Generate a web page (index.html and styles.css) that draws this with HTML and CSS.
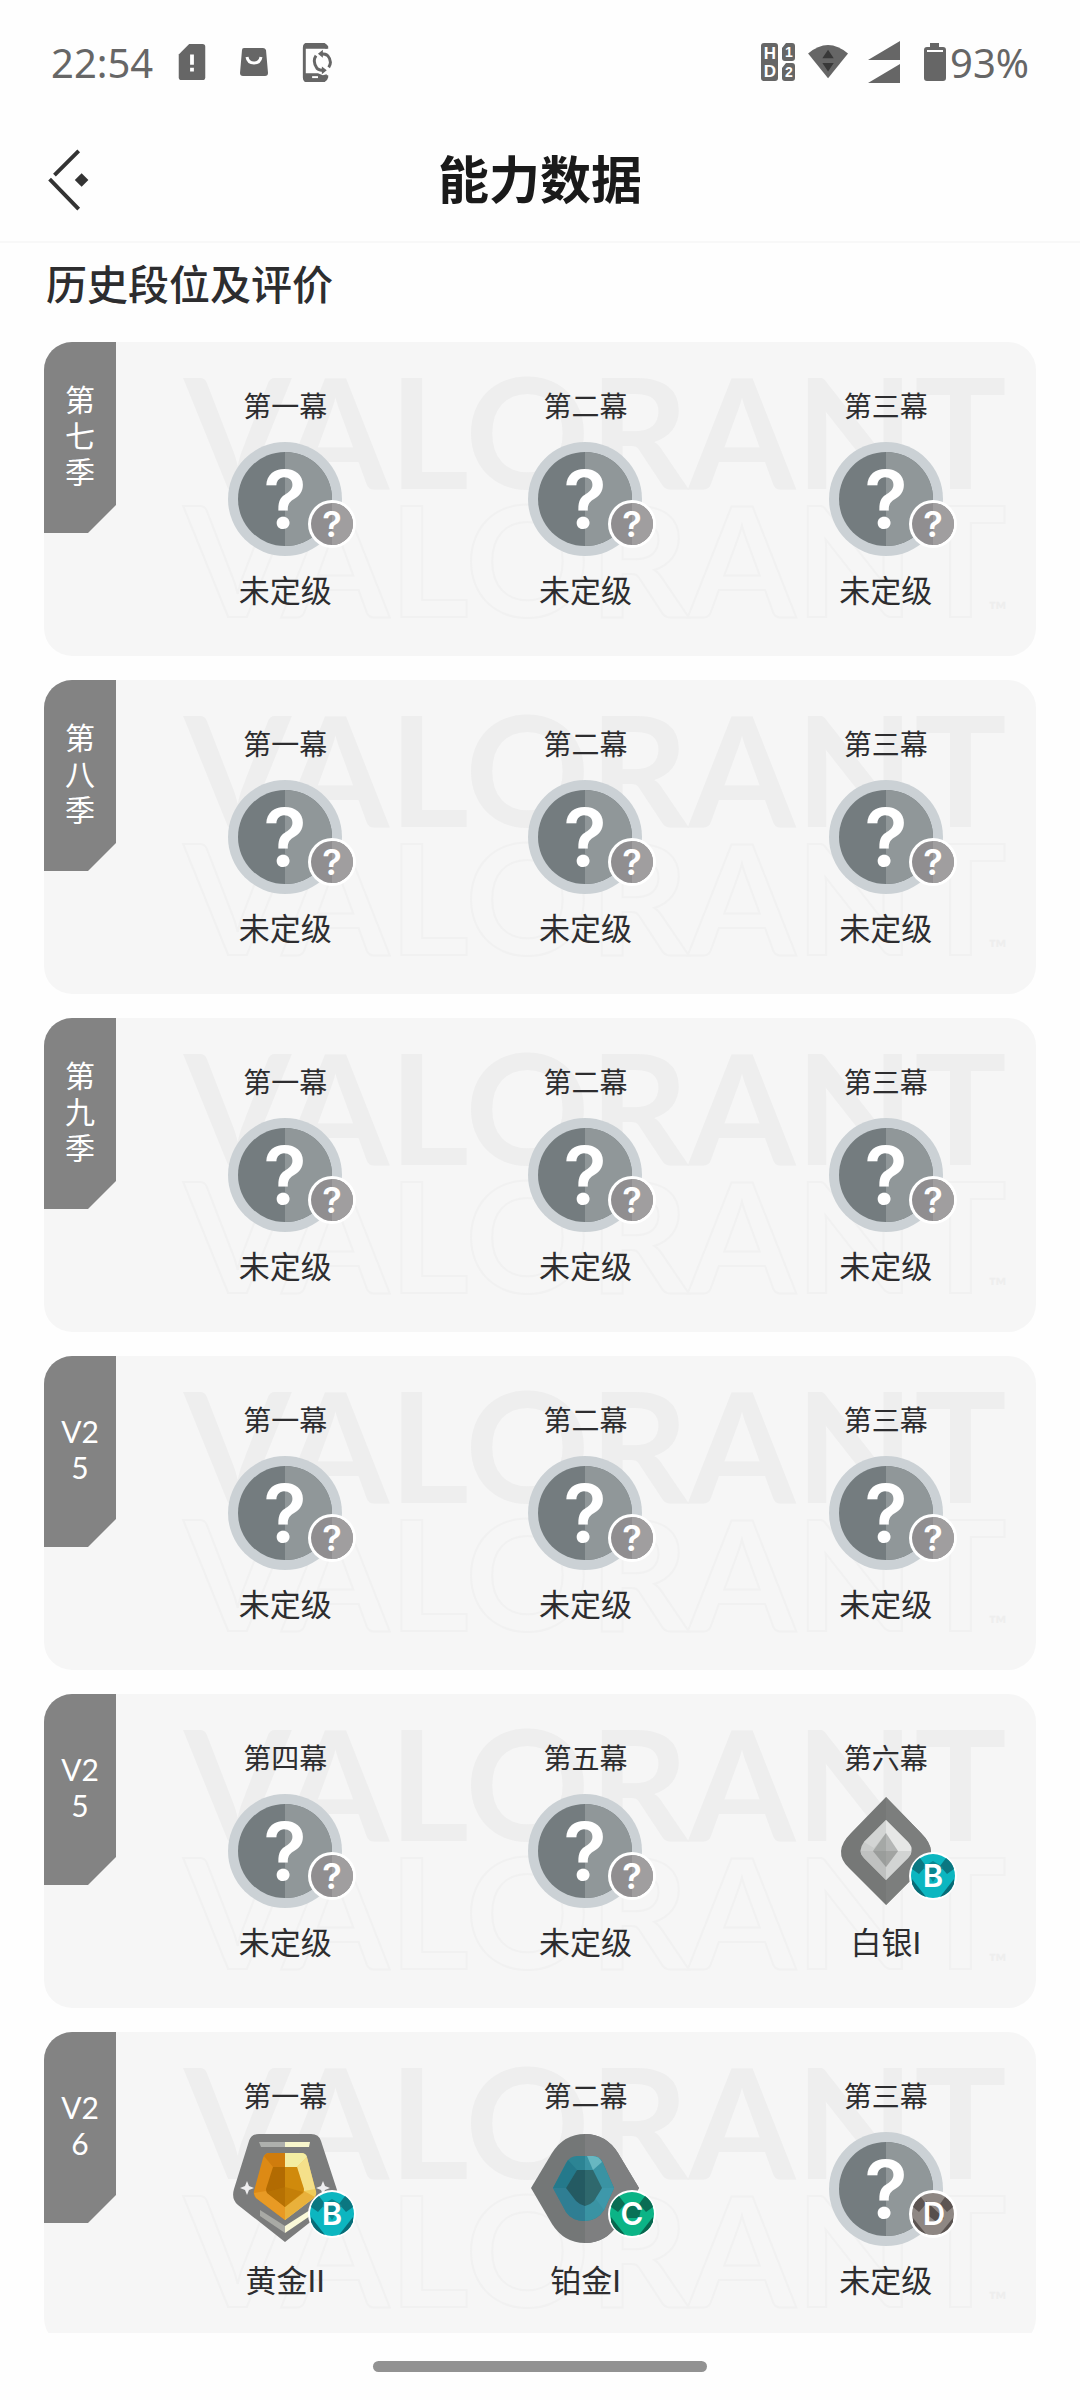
FILE: index.html
```html
<!DOCTYPE html>
<html lang="zh-CN">
<head>
    <meta charset="UTF-8">
    <meta name="viewport" content="width=device-width, initial-scale=1.0">
    <title>能力数据</title>
    <link rel="stylesheet" href="styles.css">
</head>
<body>

    <!-- Shared medals and badges -->
    <svg class="defs" width="0" height="0" aria-hidden="true">
        <symbol id="unranked" viewBox="0 0 114 114">
            <circle cx="57" cy="57" r="57" fill="#cbd1d5"/>
            <circle cx="57" cy="57" r="47" fill="#747c7f"/>
            <path d="M57 10a47 47 0 0 1 0 94z" fill="#909799"/>
            <text class="mark" x="57" y="86" text-anchor="middle">?</text>
        </symbol>
        <symbol id="silver" viewBox="0 0 114 114">
            <path d="M57 3L22 39Q3 58 20 74L57 111L94 74Q111 58 92 39Z" fill="#767877"/>
            <path d="M57 3L92 39Q111 58 94 74L57 111Z" fill="#7c7e7d"/>
            <path d="M57 26L35 48Q28 57 35 64L57 86L79 64Q86 57 79 48Z" fill="#c9cbca"/>
            <path d="M57 26L79 48Q84 53 82 57H57Z" fill="#e6e7e6"/>
            <path d="M57 26L35 48L45 54L57 39Z" fill="#d3d5d4"/>
            <path d="M32 57H57V86L35 64Q31 60 32 57Z" fill="#bfc1c0"/>
            <path d="M57 86V57H82Q83 60 79 64Z" fill="#d2d4d3"/>
            <path d="M57 39L44 57L57 73Z" fill="#a5a8a6"/>
            <path d="M57 39L69 57L57 73Z" fill="#b4b6b5"/>
            <path d="M44 57H69L57 73Z" fill="#8f9290" opacity=".5"/>
        </symbol>
        <symbol id="gold" viewBox="0 0 114 114">
            <path d="M31 2H83Q91 2 93 9L109 58Q111 67 104 73L57 110L10 73Q3 67 6 57L21 9Q23 2 31 2Z" fill="#7b7c7c"/>
            <path d="M31 10H57V15H33Z" fill="#aeb0ad"/>
            <path d="M57 10H82L81 15H57Z" fill="#f7f6cc"/>
            <path d="M32 78L57 94V101L32 84Z" fill="#a9aaa5"/>
            <path d="M82 78L57 94V101L82 84Z" fill="#fbf9d8"/>
            <path d="M41 21H57V88L28 66Q25 63 26 59L35 26Q37 21 41 21Z" fill="#dd8a15"/>
            <path d="M41 21H57V35H45L36 24Q38 21 41 21Z" fill="#cf7c0d"/>
            <path d="M26 61L38 59L57 75V88L28 66Z" fill="#e89a24"/>
            <path d="M57 21H73Q78 21 79 26L88 59Q89 63 86 66L57 88Z" fill="#f0cc59"/>
            <path d="M57 21H73Q78 21 79 25L69 35H57Z" fill="#f3eda2"/>
            <path d="M79 25L87 57L76 59L69 35Z" fill="#f5e08a"/>
            <path d="M57 75L76 59L87 65L57 88Z" fill="#e9b13b"/>
            <path d="M45 35H57V75L39 61Q38 59 38 57Z" fill="#b26b02"/>
            <path d="M57 35H69L76 57Q76 60 75 61L57 75Z" fill="#d08a0c"/>
            <path d="M39 60L57 55L75 60L57 75Z" fill="#b97605" opacity=".55"/>
            <path d="M19 49L21 54L26 56L21 58L19 63L17 58L12 56L17 54Z" fill="#eeeeef"/>
            <path d="M95 49L97 54L102 56L97 58L95 63L93 58L88 56L93 54Z" fill="#eeeeef"/>
        </symbol>
        <symbol id="platinum" viewBox="0 0 114 114">
            <path d="M3 56L24 21Q36 2 57 2Q78 2 90 21L111 56L90 92Q78 111 57 111Q36 111 24 92Z" fill="#747777"/>
            <path d="M57 2Q78 2 90 21L111 56L90 92Q78 111 57 111Z" fill="#7e7f80"/>
            <path d="M25 56L38 31Q42 24 49 24H65Q72 24 75 31L86 56L76 78Q69 89 57 89Q44 89 38 80Z" fill="#2c8494"/>
            <path d="M57 24H65Q72 24 75 31L86 56L76 78Q69 89 57 89Z" fill="#3a93a3"/>
            <path d="M59 24H65Q71 24 74 30L65 38Z" fill="#68b7c1"/>
            <path d="M40 28L49 38L38 56H25Z" fill="#24798b"/>
            <path d="M38 56L57 74V89Q44 89 38 80L25 56Z" fill="#2f7e93"/>
            <path d="M74 56H86L76 78L67 66Z" fill="#3e98aa"/>
            <path d="M49 38H57V74Q52 73 48 69L38 56Z" fill="#245a62"/>
            <path d="M57 38H65L74 56L66 69Q62 73 57 74Z" fill="#2f686d"/>
        </symbol>
        <symbol id="badge-none" viewBox="0 0 48 48">
            <circle cx="24" cy="24" r="24" fill="#fff"/>
            <circle cx="24" cy="24" r="21" fill="#908e90"/>
            <path d="M24 3a21 21 0 0 1 0 42z" fill="#a09e9f"/>
            <text class="small-mark" x="24" y="37" text-anchor="middle">?</text>
        </symbol>
        <symbol id="badge-b" viewBox="0 0 48 48">
            <circle cx="24" cy="24" r="24" fill="#fff"/>
            <circle cx="24" cy="24" r="22" fill="#0cb6c0"/>
            <path d="M11 6L17 14L10 22L3 17Q5 10 11 6Z" fill="#0b7781"/>
            <path d="M37 6L31 14L38 22L45 17Q43 10 37 6Z" fill="#0b7781"/>
            <path d="M14 15L24 9L34 15L24 30Z" fill="#0a8790"/>
            <path d="M3 27L17 45Q7 42 3 32Z" fill="#086c77"/>
            <path d="M45 27L31 45Q41 42 45 32Z" fill="#086c77"/>
            <text class="grade" x="24" y="35" text-anchor="middle">B</text>
        </symbol>
        <symbol id="badge-c" viewBox="0 0 48 48">
            <circle cx="24" cy="24" r="24" fill="#fff"/>
            <circle cx="24" cy="24" r="22" fill="#0bb486"/>
            <path d="M11 6L17 14L10 22L3 17Q5 10 11 6Z" fill="#0a6d54"/>
            <path d="M37 6L31 14L38 22L45 17Q43 10 37 6Z" fill="#0a6d54"/>
            <path d="M15 19L24 12L33 19L31 28H18Z" fill="#087157"/>
            <path d="M3 27L17 45Q7 42 3 32Z" fill="#08674e"/>
            <path d="M45 27L31 45Q41 42 45 32Z" fill="#08674e"/>
            <text class="grade" x="24" y="35" text-anchor="middle">C</text>
        </symbol>
        <symbol id="badge-d" viewBox="0 0 48 48">
            <circle cx="24" cy="24" r="24" fill="#fff"/>
            <circle cx="24" cy="24" r="21" fill="#8e8783"/>
            <path d="M12 7L17 14L10 22L4 17Q6 11 12 7Z" fill="#5d5552"/>
            <path d="M36 7L31 14L38 22L44 17Q42 11 36 7Z" fill="#5d5552"/>
            <path d="M17 11L35 28L29 33L17 24Z" fill="#564f4c"/>
            <path d="M4 28L17 44Q8 41 4 32Z" fill="#5b5451"/>
            <path d="M44 28L31 44Q40 41 44 32Z" fill="#5b5451"/>
            <text class="grade" x="25" y="35" text-anchor="middle">D</text>
        </symbol>
    </svg>

    <div class="status-bar">
        <time class="clock">22:54</time>
        <div class="status-left">
            <svg width="28" height="36" viewBox="0 0 28 38">
                <path d="M11 0H25Q28 0 28 3V35Q28 38 25 38H3Q0 38 0 35V11Z" fill="#666"/>
                <path d="M12 11H16V22H12ZM12 25H16V29H12Z" fill="#fff"/>
            </svg>
            <svg width="28" height="28" viewBox="0 0 28 28">
                <path d="M4 0H23Q25 0 26 2L28 25Q28 28 25 28H3Q0 28 0 25L2 2Q2 0 4 0Z" fill="#666"/>
                <path d="M7 9Q8 15 14 15Q20 15 21 9" fill="none" stroke="#fff" stroke-width="3"/>
            </svg>
            <svg width="30" height="39" viewBox="0 0 30 40">
                <path d="M25 6V4Q23 1 20 1H6Q2 1 2 5V35Q2 39 6 39H20Q24 39 25 35V33" fill="none" stroke="#666" stroke-width="3"/>
                <path d="M1 6V3Q2 0 6 0H20Q25 0 25 5V6ZM1 31H16L21 33L25 32V35Q24 40 20 40H6Q1 40 1 35Z" fill="#666"/>
                <path d="M10 35H16" stroke="#fff" stroke-width="2"/>
                <path d="M14 13Q10 19 15 26Q17 28 22 28M27 25Q31 19 26 13Q24 11 19 11" fill="none" stroke="#666" stroke-width="3"/>
                <path d="M21 7V15L16 11ZM20 24V32L25 28Z" fill="#666"/>
            </svg>
        </div>
        <div class="status-right">
            <svg class="hd" width="36" height="40" viewBox="0 0 36 40">
                <path d="M4 1H15Q18 1 18 4V36Q18 39 15 39H4Q1 39 1 36V4Q1 1 4 1ZM26 1H32Q35 1 35 4V16Q35 19 32 19H25Q22 19 22 16V6ZM26 21H32Q35 21 35 24V36Q35 39 32 39H25Q22 39 22 36V26Z" fill="#666"/>
                <text x="10" y="17" text-anchor="middle">H</text>
                <text x="10" y="35" text-anchor="middle">D</text>
                <text class="sim" x="29" y="15" text-anchor="middle">1</text>
                <text class="sim" x="29" y="35" text-anchor="middle">2</text>
            </svg>
            <svg width="50" height="38" viewBox="0 0 50 40">
                <path d="M3 11Q24 -7 45 11L24 37Z" fill="#666"/>
                <path d="M24 7L30 16H18ZM24 30L30 21H18Z" fill="#383838"/>
            </svg>
            <svg width="50" height="42" viewBox="0 0 50 42">
                <path d="M6 19L38 0V19ZM6 42L38 23V42Z" fill="#666"/>
            </svg>
            <svg width="26" height="38" viewBox="0 0 26 38">
                <path d="M10 0H19V4H23Q26 4 26 7V35Q26 38 23 38H7Q4 38 4 35V7Q4 4 7 4H10Z" fill="#666"/>
                <path d="M7 8H23" stroke="#fff" stroke-width="2"/>
            </svg>
            <span>93%</span>
        </div>
    </div>

    <header class="header">
        <button type="button" class="back" aria-label="返回">
            <svg width="42" height="64" viewBox="0 0 42 66">
                <path d="M6 28L31 3M1 32L31 63" fill="none" stroke="#333" stroke-width="4"/>
                <path d="M34 26L41 33L34 40L27 33Z" fill="#333"/>
            </svg>
        </button>
        <h1>能力数据</h1>
    </header>

    <main class="content">
        <h2>历史段位及评价</h2>

        <section class="card">
            <div class="watermark" aria-hidden="true"><span>VALORANT</span><span class="outline">VALORANT</span><small>™</small></div>
            <h3 class="season">第七季</h3>
            <div class="acts">
                <div class="act">
                    <h4>第一幕</h4>
                    <div class="rank"><svg class="medal"><use href="#unranked"/></svg><svg class="badge"><use href="#badge-none"/></svg></div>
                    <p>未定级</p>
                </div>
                <div class="act">
                    <h4>第二幕</h4>
                    <div class="rank"><svg class="medal"><use href="#unranked"/></svg><svg class="badge"><use href="#badge-none"/></svg></div>
                    <p>未定级</p>
                </div>
                <div class="act">
                    <h4>第三幕</h4>
                    <div class="rank"><svg class="medal"><use href="#unranked"/></svg><svg class="badge"><use href="#badge-none"/></svg></div>
                    <p>未定级</p>
                </div>
            </div>
        </section>

        <section class="card">
            <div class="watermark" aria-hidden="true"><span>VALORANT</span><span class="outline">VALORANT</span><small>™</small></div>
            <h3 class="season">第八季</h3>
            <div class="acts">
                <div class="act">
                    <h4>第一幕</h4>
                    <div class="rank"><svg class="medal"><use href="#unranked"/></svg><svg class="badge"><use href="#badge-none"/></svg></div>
                    <p>未定级</p>
                </div>
                <div class="act">
                    <h4>第二幕</h4>
                    <div class="rank"><svg class="medal"><use href="#unranked"/></svg><svg class="badge"><use href="#badge-none"/></svg></div>
                    <p>未定级</p>
                </div>
                <div class="act">
                    <h4>第三幕</h4>
                    <div class="rank"><svg class="medal"><use href="#unranked"/></svg><svg class="badge"><use href="#badge-none"/></svg></div>
                    <p>未定级</p>
                </div>
            </div>
        </section>

        <section class="card">
            <div class="watermark" aria-hidden="true"><span>VALORANT</span><span class="outline">VALORANT</span><small>™</small></div>
            <h3 class="season">第九季</h3>
            <div class="acts">
                <div class="act">
                    <h4>第一幕</h4>
                    <div class="rank"><svg class="medal"><use href="#unranked"/></svg><svg class="badge"><use href="#badge-none"/></svg></div>
                    <p>未定级</p>
                </div>
                <div class="act">
                    <h4>第二幕</h4>
                    <div class="rank"><svg class="medal"><use href="#unranked"/></svg><svg class="badge"><use href="#badge-none"/></svg></div>
                    <p>未定级</p>
                </div>
                <div class="act">
                    <h4>第三幕</h4>
                    <div class="rank"><svg class="medal"><use href="#unranked"/></svg><svg class="badge"><use href="#badge-none"/></svg></div>
                    <p>未定级</p>
                </div>
            </div>
        </section>

        <section class="card">
            <div class="watermark" aria-hidden="true"><span>VALORANT</span><span class="outline">VALORANT</span><small>™</small></div>
            <h3 class="season">V25</h3>
            <div class="acts">
                <div class="act">
                    <h4>第一幕</h4>
                    <div class="rank"><svg class="medal"><use href="#unranked"/></svg><svg class="badge"><use href="#badge-none"/></svg></div>
                    <p>未定级</p>
                </div>
                <div class="act">
                    <h4>第二幕</h4>
                    <div class="rank"><svg class="medal"><use href="#unranked"/></svg><svg class="badge"><use href="#badge-none"/></svg></div>
                    <p>未定级</p>
                </div>
                <div class="act">
                    <h4>第三幕</h4>
                    <div class="rank"><svg class="medal"><use href="#unranked"/></svg><svg class="badge"><use href="#badge-none"/></svg></div>
                    <p>未定级</p>
                </div>
            </div>
        </section>

        <section class="card">
            <div class="watermark" aria-hidden="true"><span>VALORANT</span><span class="outline">VALORANT</span><small>™</small></div>
            <h3 class="season">V25</h3>
            <div class="acts">
                <div class="act">
                    <h4>第四幕</h4>
                    <div class="rank"><svg class="medal"><use href="#unranked"/></svg><svg class="badge"><use href="#badge-none"/></svg></div>
                    <p>未定级</p>
                </div>
                <div class="act">
                    <h4>第五幕</h4>
                    <div class="rank"><svg class="medal"><use href="#unranked"/></svg><svg class="badge"><use href="#badge-none"/></svg></div>
                    <p>未定级</p>
                </div>
                <div class="act">
                    <h4>第六幕</h4>
                    <div class="rank"><svg class="medal"><use href="#silver"/></svg><svg class="badge"><use href="#badge-b"/></svg></div>
                    <p>白银I</p>
                </div>
            </div>
        </section>

        <section class="card">
            <div class="watermark" aria-hidden="true"><span>VALORANT</span><span class="outline">VALORANT</span><small>™</small></div>
            <h3 class="season">V26</h3>
            <div class="acts">
                <div class="act">
                    <h4>第一幕</h4>
                    <div class="rank"><svg class="medal"><use href="#gold"/></svg><svg class="badge"><use href="#badge-b"/></svg></div>
                    <p>黄金II</p>
                </div>
                <div class="act">
                    <h4>第二幕</h4>
                    <div class="rank"><svg class="medal"><use href="#platinum"/></svg><svg class="badge"><use href="#badge-c"/></svg></div>
                    <p>铂金I</p>
                </div>
                <div class="act">
                    <h4>第三幕</h4>
                    <div class="rank"><svg class="medal"><use href="#unranked"/></svg><svg class="badge"><use href="#badge-d"/></svg></div>
                    <p>未定级</p>
                </div>
            </div>
        </section>
    </main>

    <footer class="home-bar"><span></span></footer>

</body>
</html>
```
FILE: styles.css
```css
* {
    box-sizing: border-box;
}

body {
    display: flex;
    flex-direction: column;
    height: 100vh;
    margin: 0;
    background-color: #fefefe;
    color: #2d2d2f;
    font-family: Lato, "Noto Sans CJK SC", sans-serif;
}

h1, h2, h3, h4, p {
    margin: 0;
    font-weight: 400;
}

svg {
    display: block;
}

.defs {
    position: absolute;
}

/* Status bar */
.status-bar {
    display: flex;
    align-items: center;
    flex-shrink: 0;
    height: 124px;
    padding: 0 51px;
    color: #666;
    font-family: "Noto Sans", sans-serif;
    font-size: 40px;
}

.status-left {
    display: flex;
    align-items: center;
    gap: 34px;
    margin-left: 25px;
}

.status-right {
    display: flex;
    align-items: center;
    gap: 8px;
    margin-left: auto;
}

.status-right span {
    margin-left: -4px;
}

.hd text {
    fill: #fff;
    font-family: "Liberation Sans", sans-serif;
    font-size: 17px;
    font-weight: 700;
}

.hd .sim {
    font-size: 14px;
}

/* Header */
.header {
    display: grid;
    grid-template-columns: 1fr auto 1fr;
    align-items: center;
    flex-shrink: 0;
    height: 119px;
    padding: 0 48px 6px;
    border-bottom: 2px solid #f8f8f8;
}

.header h1 {
    color: #1a1a1a;
    font-size: 51px;
    font-weight: 700;
    line-height: 72px;
}

.back {
    justify-self: start;
    padding: 0;
    border: none;
    background: none;
    cursor: pointer;
}

/* Season list */
.content {
    display: flex;
    flex-direction: column;
    flex: 1;
    gap: 24px;
    min-height: 0;
    padding: 12px 44px 0;
    overflow: hidden;
}

.content h2 {
    flex-shrink: 0;
    margin: 0 2px 3px;
    font-size: 41px;
    font-weight: 500;
    line-height: 60px;
}

.card {
    position: relative;
    flex-shrink: 0;
    height: 314px;
    padding-left: 91px;
    border-radius: 28px;
    background-color: #f6f6f6;
    overflow: hidden;
}

.season {
    position: absolute;
    top: 0;
    left: 0;
    display: flex;
    align-items: center;
    width: 72px;
    height: 191px;
    padding: 0 16px 6px;
    background-color: #838383;
    clip-path: polygon(0 0, 100% 0, 100% 163px, 44px 100%, 0 100%);
    color: #fff;
    font-size: 30px;
    line-height: 36px;
    text-align: center;
    word-break: break-all;
}

.acts {
    position: relative;
    display: grid;
    grid-template-columns: repeat(3, 1fr);
    padding-top: 44px;
}

.act {
    display: flex;
    flex-direction: column;
    align-items: center;
}

.act h4 {
    font-size: 28px;
    line-height: 40px;
}

.act p {
    font-size: 31px;
    line-height: 44px;
}

.rank {
    position: relative;
    margin: 16px 0 12px;
}

.medal {
    width: 114px;
    height: 114px;
}

.badge {
    position: absolute;
    right: -14px;
    bottom: 8px;
    width: 48px;
    height: 48px;
}

.mark, .small-mark, .grade {
    fill: #fff;
    font-family: Inter, sans-serif;
    font-weight: 600;
}

.mark {
    font-size: 80px;
}

.small-mark {
    font-size: 36px;
}

.grade {
    font-size: 31px;
}

/* Faded wordmark behind each card */
.watermark {
    position: absolute;
    top: 24px;
    left: 140px;
    color: #eeeeee;
    font-size: 154px;
    font-weight: 700;
    line-height: 128px;
    white-space: nowrap;
}

.watermark span {
    display: block;
}

.watermark .outline {
    color: transparent;
    -webkit-text-stroke: 2px #f1f1f1;
}

.watermark small {
    position: absolute;
    right: 0;
    bottom: 0;
    font-size: 24px;
    line-height: 24px;
}

/* Home indicator */
.home-bar {
    display: flex;
    justify-content: center;
    flex-shrink: 0;
    height: 67px;
    padding-top: 28px;
}

.home-bar span {
    width: 31%;
    height: 11px;
    border-radius: 6px;
    background-color: #929292;
}
```
